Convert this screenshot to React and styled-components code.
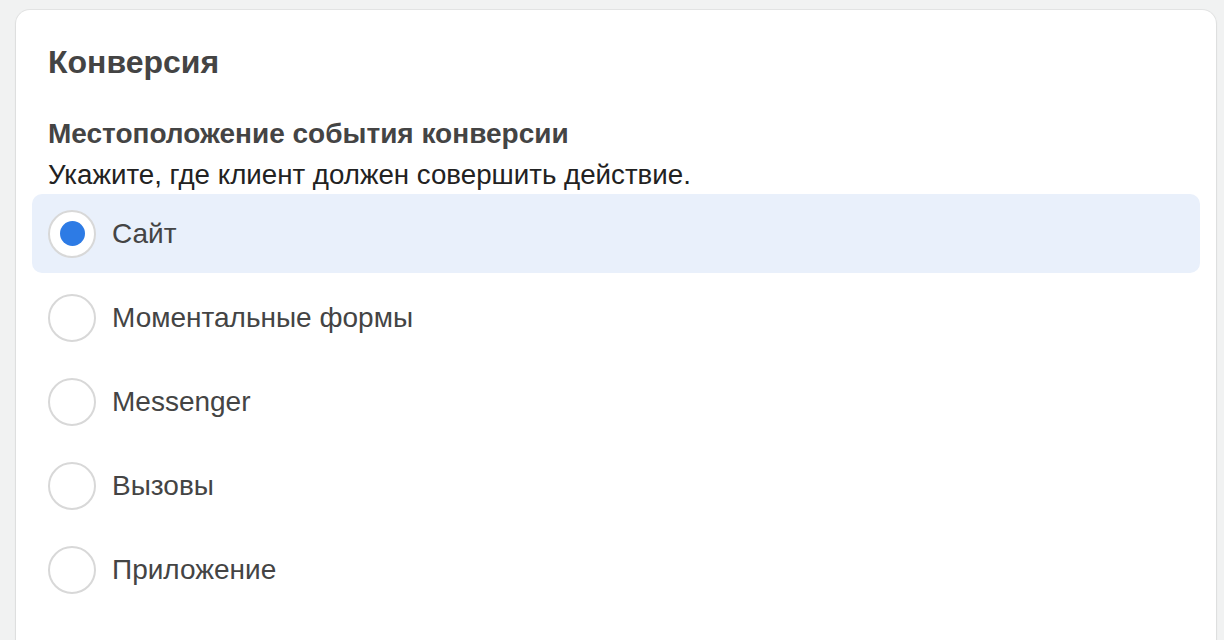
import React, { useState } from "react";
import styled, { createGlobalStyle } from "styled-components";

const Global = createGlobalStyle`
  html, body { margin: 0; padding: 0; background: #f1f2f2; }
  body { font-family: "Liberation Sans", Arial, sans-serif; color: #444; }
  * { box-sizing: border-box; }
`;

const Page = styled.div`
  padding: 10px 8px 0 16px;
  height: 640px;
  overflow: hidden;
`;

const Card = styled.div`
  background: #fff;
  border-radius: 14px;
  box-shadow: 0 0 0 1px rgba(0, 0, 0, 0.05), 0 1px 3px rgba(0, 0, 0, 0.08);
  padding: 31px 16px 40px 16px;
  min-height: 700px;
`;

const Title = styled.h2`
  margin: 0 0 0 16px;
  font-size: 32px;
  line-height: 42px;
  font-weight: 700;
  color: #444;
`;

const Section = styled.div`
  margin-top: 33px;
`;

const Label = styled.div`
  margin-left: 16px;
  font-size: 28px;
  line-height: 36px;
  font-weight: 700;
  color: #444;
`;

const Hint = styled.div`
  margin-left: 16px;
  font-size: 27.7px;
  line-height: 36px;
  color: #222;
  margin-top: 5px;
`;

const List = styled.div`
  display: flex;
  flex-direction: column;
  gap: 5px;
  margin-top: 1px;
`;

const Row = styled.label`
  display: flex;
  align-items: center;
  gap: 16px;
  height: 79px;
  padding: 0 16px;
  border-radius: 10px;
  cursor: pointer;
  background: ${(p) => (p.$selected ? "#e9f0fb" : "transparent")};
`;

const Radio = styled.span`
  width: 48px;
  height: 48px;
  border-radius: 50%;
  border: 2px solid #d8d8d8;
  background: #fff;
  display: flex;
  align-items: center;
  justify-content: center;
  flex-shrink: 0;
`;

const Dot = styled.span`
  width: 25px;
  height: 25px;
  border-radius: 50%;
  background: #2d7be5;
`;

const OptionText = styled.span`
  font-size: 28px;
  color: #444;
`;

const options = ["Сайт", "Моментальные формы", "Messenger", "Вызовы", "Приложение"];

export default function App() {
  const [sel, setSel] = useState(0);
  return (
    <Page>
      <Global />
      <Card>
        <Title>Конверсия</Title>
        <Section>
          <Label>Местоположение события конверсии</Label>
          <Hint>Укажите, где клиент должен совершить действие.</Hint>
          <List>
            {options.map((o, i) => (
              <Row key={o} $selected={sel === i} onClick={() => setSel(i)}>
                <Radio>{sel === i && <Dot />}</Radio>
                <OptionText>{o}</OptionText>
              </Row>
            ))}
          </List>
        </Section>
      </Card>
    </Page>
  );
}
